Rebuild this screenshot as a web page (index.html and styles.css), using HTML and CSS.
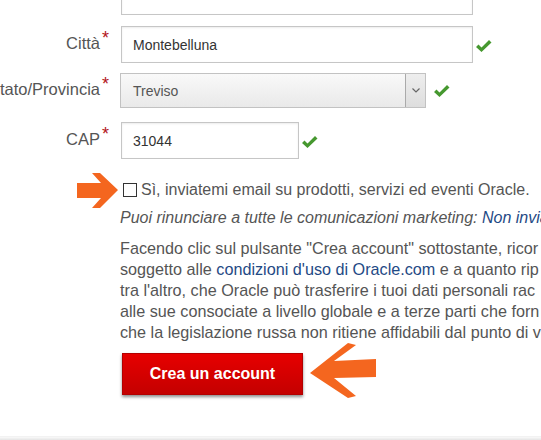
FILE: index.html
```html
<!DOCTYPE html>
<html lang="it">
<head>
    <meta charset="UTF-8">
    <meta name="viewport" content="width=device-width, initial-scale=1.0">
    <title>Crea un account Oracle</title>
    <link rel="stylesheet" href="styles.css">
</head>
<body>
    <div class="page">
        <div class="form">
            <div class="row">
                <label class="label"></label>
                <input class="field" type="text" value="">
            </div>
            <div class="row">
                <label class="label">Città<span class="req">*</span></label>
                <input class="field" type="text" value="Montebelluna">
                <span class="ok"><svg width="17" height="14" viewBox="0 0 17 14"><path d="M1 8 L3.5 5.5 L6.5 8.5 L14 1 L16.5 3.5 L6.5 13 Z" fill="#46982f"/></svg></span>
            </div>
            <div class="row">
                <label class="label">Stato/Provincia<span class="req">*</span></label>
                <div class="select">
                    <span class="select-text">Treviso</span>
                    <span class="select-btn"><svg width="8" height="5" viewBox="0 0 8 5"><path d="M0.5 0.5 L4 4 L7.5 0.5" fill="none" stroke="#666" stroke-width="1.2"/></svg></span>
                </div>
                <span class="ok"><svg width="17" height="14" viewBox="0 0 17 14"><path d="M1 8 L3.5 5.5 L6.5 8.5 L14 1 L16.5 3.5 L6.5 13 Z" fill="#46982f"/></svg></span>
            </div>
            <div class="row">
                <label class="label">CAP<span class="req">*</span></label>
                <input class="field short" type="text" value="31044">
                <span class="ok"><svg width="17" height="14" viewBox="0 0 17 14"><path d="M1 8 L3.5 5.5 L6.5 8.5 L14 1 L16.5 3.5 L6.5 13 Z" fill="#46982f"/></svg></span>
            </div>
        </div>

        <div class="content">
            <div class="optin"><span class="box"></span>Sì, inviatemi email su prodotti, servizi ed eventi Oracle.</div>
            <div class="note">Puoi rinunciare a tutte le comunicazioni marketing: <a href="#">Non inviatemi</a></div>
            <p class="terms">
                Facendo clic sul pulsante "Crea account" sottostante, ricor<br>
                soggetto alle <a href="#">condizioni d'uso di Oracle.com</a> e a quanto rip<br>
                tra l'altro, che Oracle può trasferire i tuoi dati personali rac<br>
                alle sue consociate a livello globale e a terze parti che forn<br>
                che la legislazione russa non ritiene affidabili dal punto di v
            </p>
            <button class="submit">Crea un account</button>
        </div>

        <svg class="arrow arrow-right" width="44" height="40" viewBox="0 0 44 40"><polygon points="0,11 24,11 15,1 23,1 41,18 23,36 15,36 24,26 0,26" fill="#f4661f"/></svg>
        <svg class="arrow arrow-left" width="70" height="60" viewBox="0 0 70 60"><polygon points="2,33 40,3 48,5 26,21 68,19 68,37 26,38 48,56 40,58" fill="#f4661f"/></svg>
    </div>
    <div class="footer"></div>
</body>
</html>
```

FILE: styles.css
```css
*{
    box-sizing: border-box;
}

html, body{
    margin: 0;
    padding: 0;
    height: 100%;
    overflow: hidden;
}

body{
    background: #fff;
    font-family: "Liberation Sans", Arial, sans-serif;
    color: #555;
    display: flex;
    flex-direction: column;
}

.page{
    position: relative;
    flex: 1;
}

.form{
    margin-top: -22px;
}

.row{
    display: flex;
    align-items: center;
    margin-bottom: 11px;
}

.row:nth-child(2){
    margin-bottom: 10px;
}

.row:nth-child(3){
    margin-bottom: 14px;
}

.label{
    width: 110px;
    flex-shrink: 0;
    display: flex;
    justify-content: flex-end;
    white-space: nowrap;
    font-size: 16.5px;
    color: #555;
    padding-right: 1px;
}

.req{
    color: #b2141a;
    font-size: 18px;
    position: relative;
    top: -6px;
    margin-left: 2px;
}

.field{
    margin-left: 11px;
    width: 352px;
    height: 37px;
    border: 1px solid #c6c6c6;
    box-shadow: inset 0 1px 2px rgba(0,0,0,0.08);
    padding: 0 11px;
    font-family: "Liberation Sans", Arial, sans-serif;
    font-size: 14px;
    color: #333;
    background: #fff;
}

.field.short{
    width: 178px;
}

.select{
    margin-left: 10px;
    width: 306px;
    height: 35px;
    border: 1px solid #c2c2c2;
    background: linear-gradient(#f9f9f9, #e9e9e9);
    display: flex;
    align-items: center;
    justify-content: space-between;
}

.select-text{
    padding-left: 12px;
    font-size: 14px;
    color: #555;
}

.select-btn{
    width: 20px;
    height: 33px;
    border-left: 1px solid #aaa;
    background: linear-gradient(#eee, #ddd);
    display: flex;
    align-items: center;
    justify-content: center;
}

.ok{
    margin-left: 2px;
    display: flex;
    padding-top: 2px;
}

.select + .ok{
    margin-left: 7px;
    padding-top: 0;
}

.content{
    padding-left: 120px;
    margin-top: 20px;
}

.optin{
    display: flex;
    align-items: center;
    white-space: nowrap;
    font-size: 16px;
    line-height: 21px;
}

.box{
    width: 14px;
    height: 14px;
    border: 1px solid #333;
    margin: 0 4px 0 3px;
    background: #fff;
}

.note{
    margin-top: 7px;
    font-size: 16px;
    line-height: 21px;
    font-style: italic;
    white-space: nowrap;
}

a{
    color: #1f4a85;
    text-decoration: none;
}

.terms{
    margin: 10px 0 0;
    font-size: 16.2px;
    line-height: 21px;
    white-space: nowrap;
}

.submit{
    margin: 10px 0 0 2px;
    width: 181px;
    height: 42px;
    border: 1px solid #b30000;
    background: linear-gradient(#e60000, #c40000);
    box-shadow: 0 2px 3px rgba(0,0,0,0.45);
    color: #fff;
    font-family: "Liberation Sans", Arial, sans-serif;
    font-weight: bold;
    font-size: 16px;
}

.arrow{
    position: absolute;
}

.arrow-right{
    left: 77px;
    top: 172px;
}

.arrow-left{
    left: 308px;
    top: 340px;
}

.footer{
    height: 4px;
    background: linear-gradient(#fafafa, #e4e4e4);
    border-top: 1px solid #f2f2f2;
}
```
